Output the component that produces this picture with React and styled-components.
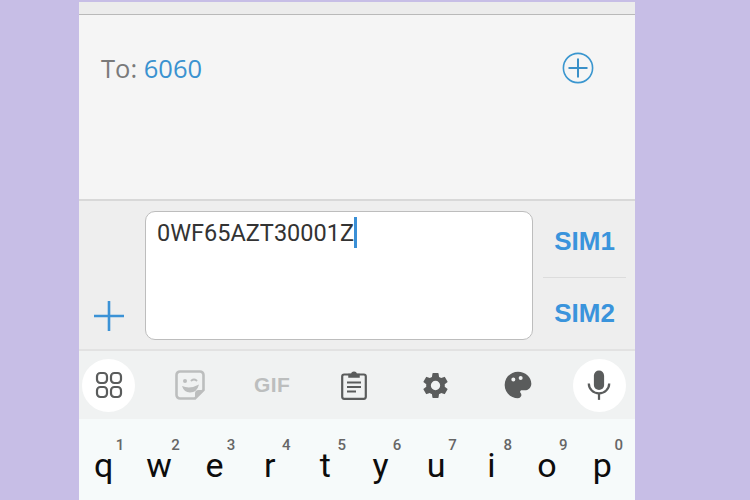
import styled, { createGlobalStyle } from "styled-components";

const GlobalStyle = createGlobalStyle`
  html, body {
    margin: 0;
    padding: 0;
    height: 100%;
    background-color: #c7bee6;
    font-family: "Roboto", "Liberation Sans", sans-serif;
  }
`;

const keys = [
  ["q", "1"], ["w", "2"], ["e", "3"], ["r", "4"], ["t", "5"],
  ["y", "6"], ["u", "7"], ["i", "8"], ["o", "9"], ["p", "0"],
];

export default function App() {
  return (
    <>
      <GlobalStyle />
      <Page>
        <Phone>
          <TopStrip />
          <Recipient>
            <ToLabel>
              To: <Number>6060</Number>
            </ToLabel>
            <AddContact viewBox="0 0 32 32">
              <circle cx="16" cy="16" r="14.6" fill="none" stroke="#3a96cf" strokeWidth="1.6" />
              <path d="M6.5 16h19M16 6.5v19" stroke="#3a90c8" strokeWidth="2" fill="none" />
            </AddContact>
          </Recipient>
          <Compose>
            <AttachColumn>
              <svg width="30" height="30" viewBox="0 0 30 30">
                <path d="M0.5 15h29M15 0.5v29" stroke="#3b92d6" strokeWidth="2.6" fill="none" strokeLinecap="round" />
              </svg>
            </AttachColumn>
            <MessageBox>
              <MessageText>0WF65AZT30001Z</MessageText>
              <Caret />
            </MessageBox>
            <SimColumn>
              <SimButton>SIM1</SimButton>
              <SimDivider />
              <SimButton>SIM2</SimButton>
            </SimColumn>
          </Compose>
          <Toolbar>
            <RoundTool>
              <svg width="28" height="28" viewBox="0 0 28 28" fill="none" stroke="#5a5c5c" strokeWidth="2.2">
                <rect x="2" y="2" width="10" height="10" rx="3.4" />
                <rect x="16" y="2" width="10" height="10" rx="3.4" />
                <rect x="2" y="16" width="10" height="10" rx="3.4" />
                <rect x="16" y="16" width="10" height="10" rx="3.4" />
              </svg>
            </RoundTool>
            <Tool>
              <svg width="30" height="30" viewBox="0 0 30 30">
                <path d="M5 1.5h20a3.5 3.5 0 0 1 3.5 3.5v15L20 28.5H5A3.5 3.5 0 0 1 1.5 25V5A3.5 3.5 0 0 1 5 1.5z" fill="none" stroke="#bcbebe" strokeWidth="2.6" />
                <circle cx="10" cy="11" r="2" fill="#bcbebe" />
                <path d="M16.5 10.5q2.5-2 5 0" fill="none" stroke="#bcbebe" strokeWidth="2" strokeLinecap="round" />
                <path d="M7 16q8 3.5 17-1.5q-2 8-9 8q-6 0-8-6.5z" fill="#bcbebe" />
                <path d="M20 28.5v-5a3.5 3.5 0 0 1 3.5-3.5h5z" fill="#bcbebe" />
              </svg>
            </Tool>
            <Tool>
              <GifLabel>GIF</GifLabel>
            </Tool>
            <Tool>
              <svg width="26" height="30" viewBox="0 0 26 30">
                <rect x="1.2" y="4.5" width="23.6" height="24.3" rx="2" fill="none" stroke="#5a5c5c" strokeWidth="2.2" />
                <path d="M8 7V4.5h2.8a2.2 2.2 0 0 1 4.4 0H18V7z" fill="#5a5c5c" stroke="#5a5c5c" strokeWidth="1.5" />
                <path d="M6 12.5h14M6 17h14M6 21.5h9" stroke="#5a5c5c" strokeWidth="2" fill="none" />
              </svg>
            </Tool>
            <Tool>
              <svg width="31" height="31" viewBox="0 0 24 24">
                <path fill="#5a5c5c" d="M19.14 12.94c.04-.3.06-.61.06-.94s-.02-.64-.07-.94l2.03-1.58a.49.49 0 0 0 .12-.61l-1.92-3.32a.49.49 0 0 0-.59-.22l-2.39.96a7 7 0 0 0-1.62-.94l-.36-2.54a.48.48 0 0 0-.48-.41h-3.84a.48.48 0 0 0-.47.41l-.36 2.54a7.3 7.3 0 0 0-1.62.94l-2.39-.96a.49.49 0 0 0-.59.22L2.73 8.87a.48.48 0 0 0 .12.61l2.03 1.58c-.05.3-.09.63-.09.94s.02.64.07.94l-2.03 1.58a.49.49 0 0 0-.12.61l1.92 3.32c.12.22.37.29.59.22l2.39-.96c.5.38 1.03.7 1.62.94l.36 2.54c.05.24.24.41.48.41h3.84c.24 0 .44-.17.47-.41l.36-2.54a6.9 6.9 0 0 0 1.62-.94l2.39.96c.22.08.47 0 .59-.22l1.92-3.32a.48.48 0 0 0-.12-.61l-2.01-1.58zM12 15.6A3.6 3.6 0 1 1 12 8.4a3.6 3.6 0 0 1 0 7.2z" />
              </svg>
            </Tool>
            <Tool>
              <svg width="32" height="32" viewBox="0 0 24 24">
                <path fill="#5a5c5c" d="M12 2C6.49 2 2 6.49 2 12s4.49 10 10 10a2.5 2.5 0 0 0 1.84-4.19c-.4-.46-.34-1.16.12-1.56.2-.17.45-.25.7-.25H17c2.76 0 5-2.24 5-5 0-4.96-4.49-9-10-9zm-3.5 4.3a1.5 1.5 0 1 1 0 3 1.5 1.5 0 0 1 0-3zm5.5-1a1.5 1.5 0 1 1 0 3 1.5 1.5 0 0 1 0-3z" />
              </svg>
            </Tool>
            <RoundTool>
              <svg width="26" height="30" viewBox="0 0 28 32">
                <rect x="8.5" y="0.5" width="11" height="21" rx="5.5" fill="#5a5c5c" />
                <path d="M3 14.5a11 10.5 0 0 0 22 0" fill="none" stroke="#5a5c5c" strokeWidth="2.4" />
                <path d="M14 25v7" stroke="#5a5c5c" strokeWidth="2.4" />
              </svg>
            </RoundTool>
          </Toolbar>
          <Keyboard>
            {keys.map(([letter, digit]) => (
              <Key key={letter}>
                <Digit>{digit}</Digit>
                <Letter>{letter}</Letter>
              </Key>
            ))}
          </Keyboard>
        </Phone>
      </Page>
    </>
  );
}

const Page = styled.div`
  width: 750px;
  height: 500px;
  overflow: hidden;
  display: flex;
  justify-content: flex-start;
  padding: 2px 0 0 79px;
  box-sizing: border-box;
`;

const Phone = styled.div`
  width: 556px;
  height: 498px;
  display: flex;
  flex-direction: column;
`;

const TopStrip = styled.div`
  height: 12px;
  background-color: #ececec;
  border-bottom: 1px solid #b9b9b9;
`;

const Recipient = styled.div`
  height: 186px;
  box-sizing: border-box;
  background-color: #f5f5f5;
  border-bottom: 2px solid #d8d8d8;
  display: flex;
  justify-content: space-between;
  align-items: flex-start;
  padding: 36px 41px 0 22px;
`;

const ToLabel = styled.div`
  font-family: "Open Sans", sans-serif;
  font-size: 25.5px;
  line-height: 34px;
  color: #7a7a7a;
`;

const Number = styled.span`
  color: #3a92d0;
`;

const AddContact = styled.svg`
  width: 32px;
  height: 32px;
  margin-top: 1px;
`;

const Compose = styled.div`
  height: 150px;
  box-sizing: border-box;
  background-color: #eeeeee;
  border-bottom: 2px solid #e2e2e2;
  display: flex;
  padding: 10px 0 9px 0;
`;

const AttachColumn = styled.div`
  width: 66px;
  display: flex;
  align-items: flex-end;
  padding: 0 0 9px 15px;
  box-sizing: border-box;
`;

const MessageBox = styled.div`
  width: 388px;
  box-sizing: border-box;
  background-color: #ffffff;
  border: 1px solid #bdbdbd;
  border-radius: 10px;
  padding: 7px 11px;
  display: flex;
  align-items: flex-start;
`;

const MessageText = styled.span`
  font-size: 23.5px;
  line-height: 28px;
  color: #333333;
`;

const Caret = styled.span`
  width: 3px;
  height: 31px;
  background-color: #3a8fd6;
  margin-top: -2px;
`;

const SimColumn = styled.div`
  flex: 1;
  display: flex;
  flex-direction: column;
  align-items: center;
  margin: -5px 0 -9px;
  padding: 0 9px 0 10px;
`;

const SimButton = styled.div`
  flex: 1;
  display: flex;
  align-items: center;
  font-family: "Liberation Sans", sans-serif;
  font-weight: 700;
  font-size: 26px;
  color: #3a94dc;
`;

const SimDivider = styled.div`
  width: 100%;
  height: 1px;
  background-color: #dcdcdc;
`;

const Toolbar = styled.div`
  height: 68px;
  background-color: #f0f2f2;
  display: flex;
  align-items: center;
  justify-content: space-between;
  padding: 0 9px 0 3px;
  box-sizing: border-box;
`;

const Tool = styled.div`
  width: 53px;
  height: 53px;
  display: flex;
  align-items: center;
  justify-content: center;
`;

const RoundTool = styled(Tool)`
  background-color: #ffffff;
  border-radius: 50%;
`;

const GifLabel = styled.span`
  font-family: "Liberation Sans", sans-serif;
  font-weight: 700;
  font-size: 21px;
  letter-spacing: 0.5px;
  color: #bcbebe;
`;

const Keyboard = styled.div`
  flex: 1;
  background-color: #f6fafa;
  display: grid;
  grid-template-columns: repeat(10, 55.4px);
`;

const Key = styled.div`
  position: relative;
  display: flex;
  justify-content: center;
  padding: 23px 6px 0 0;
`;

const Letter = styled.span`
  font-size: 34px;
  line-height: 46px;
  color: #0c0c0c;
`;

const Digit = styled.span`
  position: absolute;
  top: 17px;
  right: 10px;
  font-size: 15px;
  font-weight: 500;
  color: #666666;
`;
